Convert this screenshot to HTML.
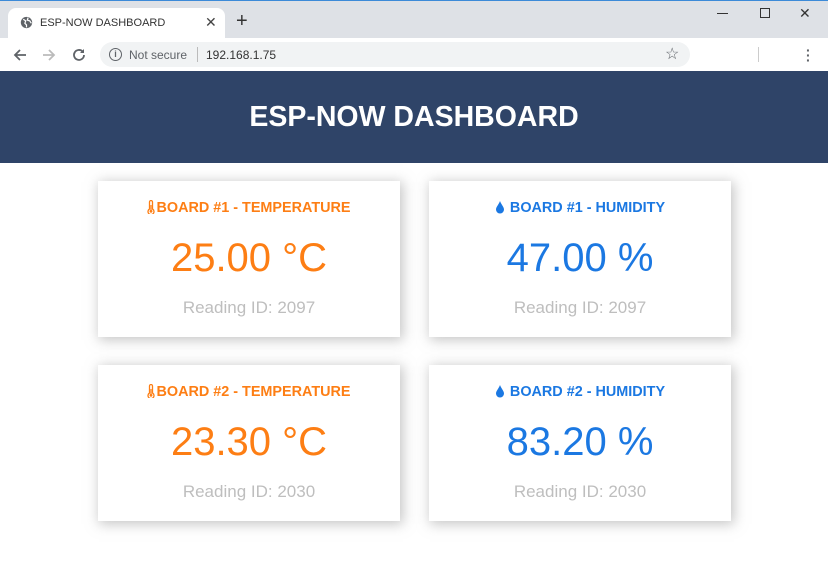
<!DOCTYPE html>
<html><head><style>
*{margin:0;padding:0;box-sizing:border-box}
body{width:828px;height:569px;overflow:hidden;font-family:"Liberation Sans",Arial,sans-serif;background:#fff;position:relative}
.tb{position:absolute;left:0;top:0;width:828px;height:38px;background:#dee1e6;border-top:1px solid #3c8ad8}
.tab{position:absolute;left:8px;top:8px;width:217px;height:31px;background:#fff;border-radius:8px 8px 0 0;font-size:11px;color:#333}
.bar{position:absolute;left:0;top:38px;width:828px;height:33px;background:#fff}
.addr{position:absolute;left:100px;top:42px;width:590px;height:25px;background:#f1f3f4;border-radius:13px;font-size:12px;color:#333}
.hdr{position:absolute;left:0;top:71px;width:828px;height:92px;background:#2f4468;color:#fff;font-weight:bold;font-size:28.5px;text-align:center;line-height:92px}
.card{position:absolute;width:302px;height:156px;background:#fff;box-shadow:2px 2px 12px 1px rgba(140,140,140,.5);text-align:center}
.t{position:absolute;left:0;right:0;top:19px;font-size:14.4px;font-weight:bold}
.t svg{vertical-align:-2px;margin-right:1px}
.v{position:absolute;left:0;right:0;top:55px;font-size:40px}
.r{position:absolute;left:0;right:0;top:117px;font-size:17px;color:#bebebe}
.o{color:#fd7e14}.b{color:#1b78e2}
</style></head><body>
<div class="tb"></div>
<div class="tab">
<svg style="position:absolute;left:12px;top:8px" width="13" height="13" viewBox="0 0 16 16"><circle cx="8" cy="8" r="7" fill="#5f6368"/><path d="M4 4l3 2-1 3 2 2v3M10 2l-1 3 3 1 2 3" stroke="#fff" stroke-width="1.5" fill="none"/></svg>
<span style="position:absolute;left:32px;top:9px">ESP-NOW DASHBOARD</span>
<span style="position:absolute;left:197px;top:6px;font-size:14px;color:#444">✕</span>
</div>
<span style="position:absolute;left:236px;top:10px;font-size:20px;color:#333">+</span>
<div style="position:absolute;left:717px;top:13px;width:11px;height:1px;background:#333"></div>
<div style="position:absolute;left:760px;top:8px;width:10px;height:10px;border:1px solid #333"></div>
<span style="position:absolute;left:799px;top:5px;font-size:14px;color:#333">✕</span>
<div class="bar"></div>
<svg style="position:absolute;left:13px;top:48px" width="14" height="14" viewBox="0 0 14 14"><path d="M13 7H2M7 2L2 7l5 5" stroke="#5f6368" stroke-width="1.8" fill="none"/></svg>
<svg style="position:absolute;left:42px;top:48px" width="14" height="14" viewBox="0 0 14 14"><path d="M1 7h11M7 2l5 5-5 5" stroke="#bbb" stroke-width="1.8" fill="none"/></svg>
<svg style="position:absolute;left:72px;top:48px" width="14" height="14" viewBox="0 0 14 14"><path d="M12 7a5 5 0 1 1-1.5-3.6" stroke="#5f6368" stroke-width="1.8" fill="none"/><path d="M12 1v4H8z" fill="#5f6368"/></svg>
<div class="addr">
<span style="position:absolute;left:9px;top:6px;width:13px;height:13px;border:1.5px solid #5f6368;border-radius:50%;font-size:9px;text-align:center;line-height:10px;color:#5f6368;font-weight:bold">i</span>
<span style="position:absolute;left:29px;top:6px;color:#5f6368">Not secure</span>
<span style="position:absolute;left:97px;top:5px;width:1px;height:15px;background:#bbb"></span>
<span style="position:absolute;left:106px;top:6px">192.168.1.75</span>
<span style="position:absolute;left:565px;top:2px;font-size:16px;color:#5f6368">☆</span>
</div>
<div style="position:absolute;left:758px;top:47px;width:1px;height:15px;background:#ccc"></div>
<div style="position:absolute;left:806px;top:48px;color:#5f6368;font-size:14px;line-height:5px;font-weight:bold">·<br>·<br>·</div>
<div class="hdr">ESP-NOW DASHBOARD</div>

<div class="card" style="left:98px;top:181px"><div class="t o"><svg width="8" height="14" viewBox="0 0 8 14"><path d="M2.5 9V2a1.5 1.5 0 0 1 3 0v7a3 3 0 1 1-3 0z" stroke="#fd7e14" stroke-width="1.3" fill="none"/><circle cx="4" cy="11.3" r="1.4" fill="#fd7e14"/><path d="M4 5v6" stroke="#fd7e14" stroke-width="1.2"/></svg>BOARD #1 - TEMPERATURE</div><div class="v o">25.00 °C</div><div class="r">Reading ID: 2097</div></div>
<div class="card" style="left:429px;top:181px"><div class="t b"><svg width="10" height="13" viewBox="0 0 10 13"><path d="M5 0C4 3 1 6 1 8.5a4 4 0 0 0 8 0C9 6 6 3 5 0z" fill="#1b78e2"/></svg> BOARD #1 - HUMIDITY</div><div class="v b">47.00 %</div><div class="r">Reading ID: 2097</div></div>
<div class="card" style="left:98px;top:365px"><div class="t o"><svg width="8" height="14" viewBox="0 0 8 14"><path d="M2.5 9V2a1.5 1.5 0 0 1 3 0v7a3 3 0 1 1-3 0z" stroke="#fd7e14" stroke-width="1.3" fill="none"/><circle cx="4" cy="11.3" r="1.4" fill="#fd7e14"/><path d="M4 5v6" stroke="#fd7e14" stroke-width="1.2"/></svg>BOARD #2 - TEMPERATURE</div><div class="v o">23.30 °C</div><div class="r">Reading ID: 2030</div></div>
<div class="card" style="left:429px;top:365px"><div class="t b"><svg width="10" height="13" viewBox="0 0 10 13"><path d="M5 0C4 3 1 6 1 8.5a4 4 0 0 0 8 0C9 6 6 3 5 0z" fill="#1b78e2"/></svg> BOARD #2 - HUMIDITY</div><div class="v b">83.20 %</div><div class="r">Reading ID: 2030</div></div>
</body></html>
